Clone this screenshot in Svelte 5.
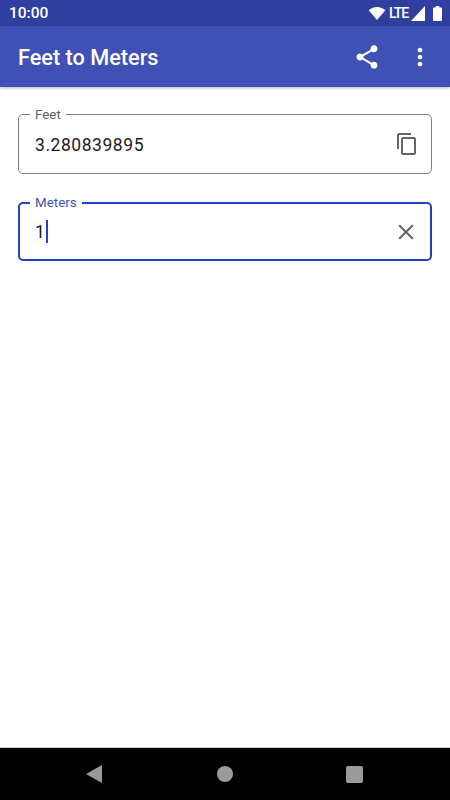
<script lang="ts">
	let feet = '3.280839895';
	let meters = '1';
</script>

<div class="screen">
	<div class="status-bar">
		<span class="clock">10:00</span>
		<div class="status-icons">
			<svg class="wifi" viewBox="0 0 18 14" width="18" height="13"><path d="M0 3.6C2.4 1.4 5.5 0 9 0s6.600 1.400 9 3.600L9 14z" /></svg>
			<span class="lte">LTE</span>
			<svg viewBox="0 0 14 14" width="14" height="15" preserveAspectRatio="none"><path d="M14 0v14H0z" /></svg>
			<svg class="battery" viewBox="0 0 10 15" width="9" height="15" preserveAspectRatio="none"><path d="M3 0h4v1.500h2a1 1 0 0 1 1 1V14a1 1 0 0 1-1 1H1a1 1 0 0 1-1-1V2.500a1 1 0 0 1 1-1h2z" /></svg>
		</div>
	</div>

	<header class="toolbar">
		<h1>Feet to Meters</h1>
		<div class="actions">
			<button aria-label="Share">
				<svg viewBox="0 0 24 24" width="28" height="28"><path d="M18 16.080c-.76 0-1.440.3-1.960.77L8.910 12.700c.05-.23.09-.46.09-.7s-.04-.47-.09-.7l7.050-4.110c.54.5 1.250.81 2.040.81 1.660 0 3-1.340 3-3s-1.340-3-3-3-3 1.340-3 3c0 .24.04.47.09.7L8.040 9.810C7.500 9.310 6.790 9 6 9c-1.660 0-3 1.340-3 3s1.340 3 3 3c.79 0 1.500-.31 2.040-.81l7.120 4.160c-.05.21-.08.43-.08.65 0 1.610 1.310 2.920 2.920 2.920 1.610 0 2.920-1.310 2.920-2.920s-1.310-2.920-2.920-2.920z" /></svg>
			</button>
			<button aria-label="More options">
				<svg viewBox="0 0 24 24" width="28" height="28"><path d="M12 8c1.100 0 2-.9 2-2s-.9-2-2-2-2 .9-2 2 .9 2 2 2zm0 2c-1.100 0-2 .9-2 2s.9 2 2 2 2-.9 2-2-.9-2-2-2zm0 6c-1.100 0-2 .9-2 2s.9 2 2 2 2-.9 2-2-.9-2-2-2z" /></svg>
			</button>
		</div>
	</header>

	<main class="content">
		<div class="field">
			<span class="label">Feet</span>
			<span class="value">{feet}</span>
			<button class="field-icon" aria-label="Copy">
				<svg viewBox="0 0 24 24" width="24" height="24"><path d="M16 1H4c-1.100 0-2 .9-2 2v14h2V3h12V1zm3 4H8c-1.100 0-2 .9-2 2v14c0 1.100.9 2 2 2h11c1.100 0 2-.9 2-2V7c0-1.100-.9-2-2-2zm0 16H8V7h11v14z" /></svg>
			</button>
		</div>

		<div class="field focused">
			<span class="label">Meters</span>
			<span class="value">{meters}<i class="caret"></i></span>
			<button class="field-icon" aria-label="Clear">
				<svg viewBox="0 0 24 24" width="26" height="26"><path d="M19 6.410L17.590 5 12 10.590 6.410 5 5 6.410 10.590 12 5 17.590 6.410 19 12 13.410 17.590 19 19 17.590 13.410 12z" /></svg>
			</button>
		</div>
	</main>

	<nav class="nav-bar">
		<svg viewBox="0 0 16 18" width="16" height="18"><path d="M16 0v18L0 9z" /></svg>
		<svg viewBox="0 0 16 16" width="16" height="16"><circle cx="8" cy="8" r="8" /></svg>
		<svg class="recents" viewBox="0 0 17 17" width="17" height="17"><rect width="17" height="17" rx="2" /></svg>
	</nav>
</div>

<style>
	:global(body) {
		margin: 0;
		background: #fff;
	}

	.screen {
		width: 450px;
		height: 800px;
		display: flex;
		flex-direction: column;
		overflow: hidden;
		font-family: Roboto, sans-serif;
	}

	.status-bar {
		height: 26px;
		flex: none;
		display: flex;
		align-items: center;
		justify-content: space-between;
		padding: 0 8px 0 9px;
		background: #303f9f;
		color: #fff;
	}

	.clock {
		font-size: 15.500px;
		font-weight: 500;
	}

	.status-icons {
		display: flex;
		align-items: center;
		gap: 3px;
	}

	.status-icons svg {
		fill: #fff;
	}

	.battery {
		margin-left: 5px;
	}

	.lte {
		font-size: 14px;
		font-weight: 500;
		letter-spacing: -1.100px;
	}

	.toolbar {
		height: 61px;
		flex: none;
		display: flex;
		align-items: center;
		justify-content: space-between;
		padding: 0 16px 0 18px;
		background: #3f51b5;
		box-shadow: 0 1px 3px rgba(0, 0, 0, 0.3);
		position: relative;
		color: #fff;
	}

	h1 {
		margin: 0;
		padding-top: 2px;
		font-size: 21.700px;
		font-weight: 500;
	}

	.actions {
		display: flex;
		align-items: center;
		gap: 25px;
	}

	button {
		padding: 0;
		border: none;
		background: none;
		display: flex;
		fill: #fff;
	}

	.content {
		flex: 1;
		display: flex;
		flex-direction: column;
		gap: 28px;
		padding: 27px 18px 0;
	}

	.field {
		position: relative;
		height: 60px;
		box-sizing: border-box;
		display: flex;
		align-items: center;
		justify-content: space-between;
		padding: 0 12px 0 16px;
		border: 1px solid #808080;
		border-radius: 5px;
	}

	.field.focused {
		height: 59px;
		padding: 0 11px 0 15px;
		border: 2px solid #2344c0;
	}

	.label {
		position: absolute;
		left: 11px;
		top: -8px;
		padding: 0 5px;
		background: #fff;
		font-size: 13.400px;
		line-height: 15px;
		color: #5f5f5f;
	}

	.focused .label {
		left: 10px;
		top: -9px;
		color: #3f51b5;
	}

	.value {
		display: flex;
		align-items: center;
		padding-top: 2px;
		font-size: 17.500px;
		letter-spacing: 0.550px;
		color: #1c1c1c;
	}

	.focused .value {
		padding-top: 0;
	}

	.caret {
		width: 2px;
		height: 23px;
		margin-left: 1px;
		background: #2344c0;
	}

	.field-icon {
		fill: #666;
	}

	.nav-bar {
		height: 53px;
		flex: none;
		display: flex;
		align-items: center;
		background: #000;
		border-top: 1px solid #ccc;
		box-sizing: border-box;
		padding-left: 86px;
		gap: 115px;
	}

	.nav-bar svg {
		fill: #9a9a9a;
	}

	.recents {
		margin-left: -2px;
	}
</style>
